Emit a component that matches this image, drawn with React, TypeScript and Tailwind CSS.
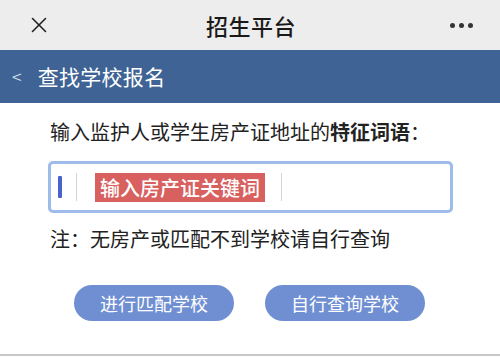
import { X } from "lucide-react";

const font = { fontFamily: '"Noto Sans CJK SC", "Noto Sans", sans-serif' };

export default function App() {
  return (
    <div className="w-[500px] h-[361px] bg-white flex flex-col overflow-hidden" style={font}>
      {/* top bar */}
      <div className="h-[50px] bg-[#ededed] flex items-center justify-between px-[26px] shrink-0">
        <X className="w-[26px] h-[26px] text-[#222]" strokeWidth={1.5} />
        <div className="text-[22px] font-medium text-[#1a1a1a] tracking-[0.5px]">招生平台</div>
        <div className="flex gap-[4px] pr-[1px]">
          <span className="w-[5px] h-[5px] rounded-full bg-[#333]" />
          <span className="w-[5px] h-[5px] rounded-full bg-[#333]" />
          <span className="w-[5px] h-[5px] rounded-full bg-[#333]" />
        </div>
      </div>
      {/* blue header */}
      <div className="h-[53px] bg-[#3e6394] flex items-center pl-[12px] gap-[16px] text-white shrink-0">
        <span className="text-[18px] font-light text-[#dfe6f0]">&lt;</span>
        <span className="text-[21px] tracking-[0.3px]">查找学校报名</span>
      </div>
      {/* body */}
      <div className="flex-1 flex flex-col px-[48px] pt-[15px]">
        <div className="text-[20px] text-[#222] leading-[28px] pl-[2px]">
          输入监护人或学生房产证地址的<span className="font-bold">特征词语</span>：
        </div>
        <div className="mt-[15px] w-[405px] h-[52px] rounded-[5px] border-[3px] border-[#9dbcec] flex items-center pl-[7px]">
          <span className="w-[4px] h-[22px] bg-[#4a63cc] rounded-[1px]" />
          <span className="w-[1px] h-[28px] bg-[#d4d4d4] ml-[14px]" />
          <span className="ml-[18px] h-[29px] px-[5px] bg-[#d8605f] text-white text-[20px] font-medium leading-[29px]">
            输入房产证关键词
          </span>
          <span className="w-[1px] h-[28px] bg-[#d4d4d4] ml-[16px]" />
        </div>
        <div className="mt-[12px] text-[20px] text-[#222] leading-[28px] pl-[2px]">
          注：无房产或匹配不到学校请自行查询
        </div>
        <div className="mt-[32px] flex gap-[31px] pl-[26px]">
          <button className="w-[160px] h-[36px] rounded-full bg-[#6f8fd2] text-white text-[18px]">
            进行匹配学校
          </button>
          <button className="w-[160px] h-[36px] rounded-full bg-[#6f8fd2] text-white text-[18px]">
            自行查询学校
          </button>
        </div>
      </div>
      <div className="h-[2px] bg-[#c8c8c8] mb-[5px] shrink-0" />
    </div>
  );
}
